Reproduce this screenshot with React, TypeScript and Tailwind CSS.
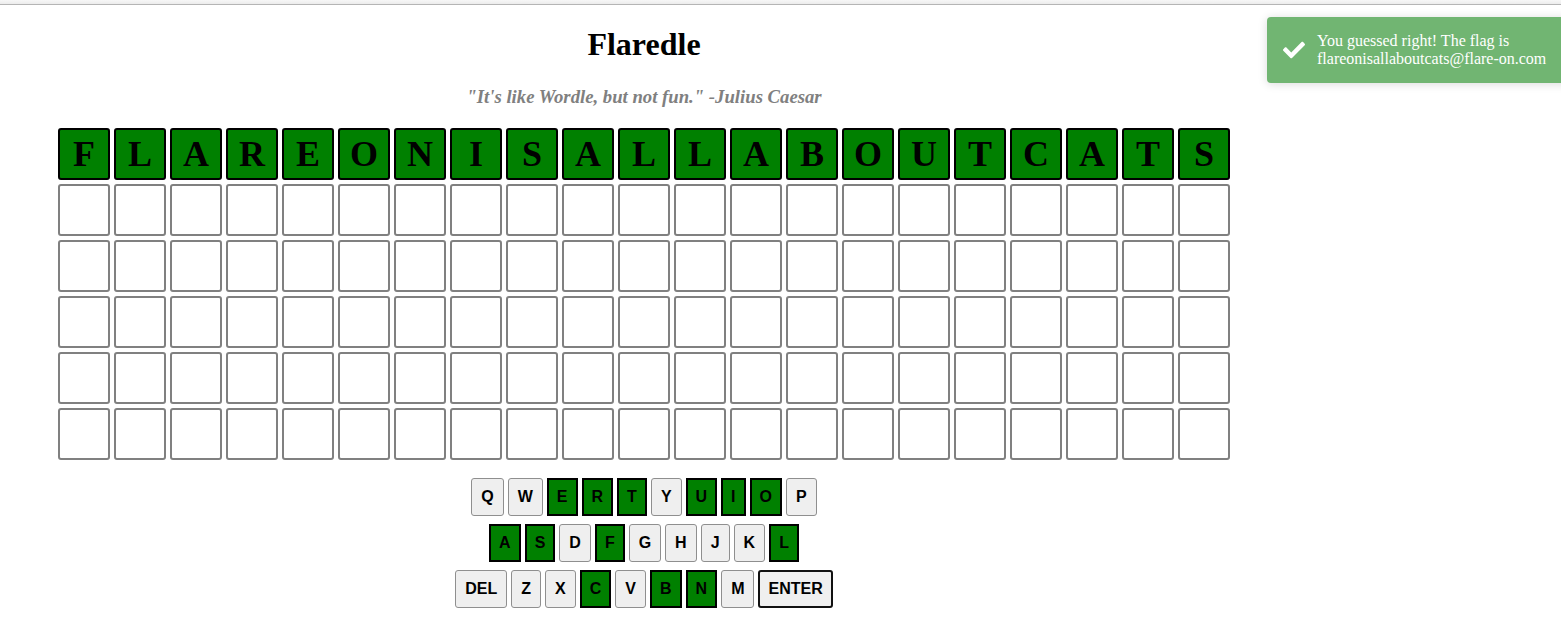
import { FaCheck } from "react-icons/fa";

const WORD = "FLAREONISALLABOUTCATS";
const ROWS = 6;

const KEY_ROWS = [
  ["Q", "W", "E", "R", "T", "Y", "U", "I", "O", "P"],
  ["A", "S", "D", "F", "G", "H", "J", "K", "L"],
  ["DEL", "Z", "X", "C", "V", "B", "N", "M", "ENTER"],
];

const Tile = ({ letter }: { letter?: string }) => {
  if (letter) {
    return (
      <div className="w-[52px] h-[52px] border-2 border-black rounded-[3px] bg-[#008000] flex items-center justify-center text-[36px] font-bold text-black [font-family:'Liberation_Serif',serif]">
        {letter}
      </div>
    );
  }
  return <div className="w-[52px] h-[52px] border-2 border-[#808080] rounded-[3px] bg-white" />;
};

const Key = ({ label, used }: { label: string; used: boolean }) => {
  if (label === "ENTER") {
    return (
      <button className="h-[38px] px-[8px] border-2 border-[#111] rounded-[3px] bg-[#efefef] text-[16px] font-bold text-black">
        {label}
      </button>
    );
  }
  if (used) {
    return (
      <button className="h-[38px] px-[8px] border-2 border-black bg-[#008000] text-[16px] font-bold text-black">
        {label}
      </button>
    );
  }
  return (
    <button className="h-[38px] px-[9px] border border-[#8f8f8f] rounded-[3px] bg-[#efefef] text-[16px] font-bold text-black">
      {label}
    </button>
  );
};

export default function App() {
  const usedLetters = new Set(WORD.split(""));

  return (
    <div className="relative w-full h-[633px] overflow-hidden bg-white">
      <div className="h-[5px] bg-gradient-to-b from-[#f7f7f7] to-[#ececec] border-b border-[#b5b5b5]" />

      <div className="w-[1288px] flex flex-col items-center">
        <h1 className="mt-[21px] text-[32px] leading-[37px] font-bold text-black [font-family:'Liberation_Serif',serif]">
          Flaredle
        </h1>
        <p className="mt-[23px] text-[18.72px] leading-[21px] font-bold italic text-[#808080] [font-family:'Liberation_Serif',serif]">
          "It's like Wordle, but not fun." -Julius Caesar
        </p>

        {/* board */}
        <div className="mt-[21px] flex flex-col gap-[4px]">
          {Array.from({ length: ROWS }).map((_, r) => (
            <div key={r} className="flex gap-[4px]">
              {WORD.split("").map((ch, c) => (
                <Tile key={c} letter={r === 0 ? ch : undefined} />
              ))}
            </div>
          ))}
        </div>

        {/* keyboard */}
        <div className="mt-[18px] flex flex-col items-center gap-[8px] [font-family:'Liberation_Sans',sans-serif]">
          {KEY_ROWS.map((row, i) => (
            <div key={i} className="flex gap-[4px]">
              {row.map((k) => (
                <Key key={k} label={k} used={k.length === 1 && usedLetters.has(k)} />
              ))}
            </div>
          ))}
        </div>
      </div>

      {/* toast */}
      <div className="absolute top-[17px] left-[1267px] w-[310px] h-[66px] rounded-[4px] bg-[#71b572] shadow-[0_1px_10px_rgba(0,0,0,0.15)] flex items-center gap-[12px] pl-[16px]">
        <FaCheck className="w-[22px] h-[22px] text-white shrink-0" />
        <div className="text-[16px] leading-[18px] text-white [font-family:'Liberation_Serif',serif]">
          You guessed right! The flag is
          <br />
          flareonisallaboutcats@flare-on.com
        </div>
      </div>
    </div>
  );
}
